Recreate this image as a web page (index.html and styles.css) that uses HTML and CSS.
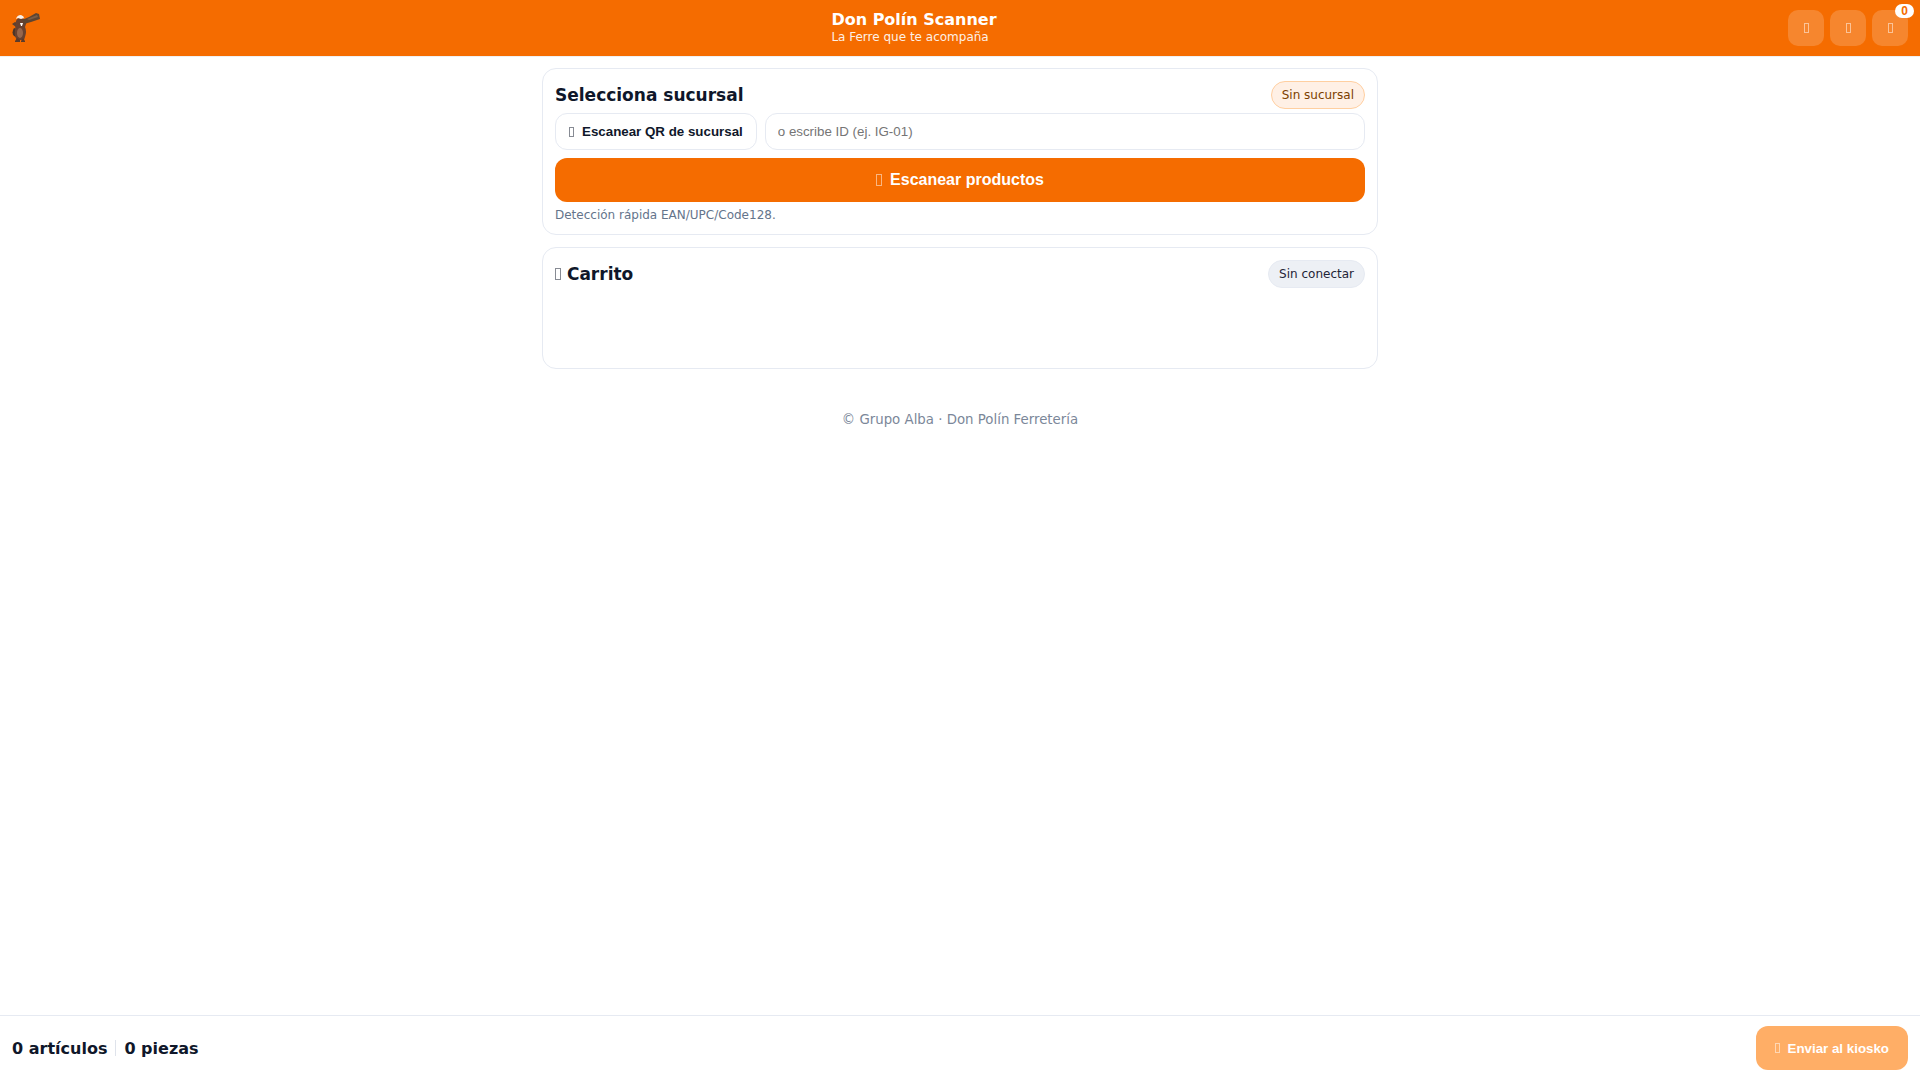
FILE: index.html
```html
<!DOCTYPE html>
<html lang="es">

<head>
    <meta charset="UTF-8">
    <meta name="viewport" content="width=device-width, initial-scale=1.0">
    <title>Don Polín Scanner</title>
    <link rel="stylesheet" href="styles.css">
</head>

<body>
    <header class="topbar">
        <svg class="logo" viewBox="0 0 28 30" role="img" aria-label="Don Polín">
            <path d="M2 15 Q-1 20 2 23 L6 25 L7 17 Z" fill="#493529" />
            <path d="M0 11 L3 9 L7 11 L8 15 L4 14 Z" fill="#5b4030" />
            <path d="M4 8 Q6 4 10 5 L15 8 L13 14 Q15 18 13 24 L12 27 H5 Q2 23 3 17 Z" fill="#68412f" />
            <ellipse cx="8" cy="20" rx="3" ry="5" fill="#96664c" />
            <path d="M10 7 L17 4 L24 0 L27 1 L28 6 L19 9 L12 11 Z" fill="#5d4431" />
            <path d="M15 6 L25 2 L26 4 L17 7 Z" fill="#7a5d46" />
            <path d="M4 6 Q5 2 9 2 Q12 3 12 5 L9 6 L6 5 Z" fill="#f8f0e9" />
            <path d="M8 10 H11 L10 13 H9 Z" fill="#fff" />
            <path d="M3 28 L5 25 L8 27 V29 H3 Z M9 28 L11 25 L13 28 V29 H9 Z" fill="#5a3b2b" />
        </svg>
        <div class="brand">
            <h1 class="brand-title">Don Polín Scanner</h1>
            <div class="brand-sub">La Ferre que te acompaña</div>
        </div>
        <div class="actions">
            <button class="icon-btn" type="button" aria-label="Linterna"><i class="icon"></i></button>
            <button class="icon-btn" type="button" aria-label="Ayuda"><i class="icon"></i></button>
            <button class="icon-btn" type="button" aria-label="Carrito"><i class="icon"></i><span class="count">0</span></button>
        </div>
    </header>

    <main class="container">
        <section class="card">
            <div class="card-head">
                <h2 class="card-title">Selecciona sucursal</h2>
                <span class="pill pill-warn">Sin sucursal</span>
            </div>
            <div class="branch-row">
                <button class="btn btn-outline" type="button"><i class="icon"></i>Escanear QR de sucursal</button>
                <input class="input" type="text" aria-label="ID de sucursal" placeholder="o escribe ID (ej. IG-01)">
            </div>
            <button class="btn btn-primary btn-block" type="button"><i class="icon icon-lg"></i>Escanear productos</button>
            <p class="hint">Detección rápida EAN/UPC/Code128.</p>
        </section>

        <section class="card card-cart">
            <div class="card-head">
                <h2 class="card-title"><i class="icon icon-lg"></i> Carrito</h2>
                <span class="pill">Sin conectar</span>
            </div>
        </section>

        <footer class="footer">© Grupo Alba · Don Polín Ferretería</footer>
    </main>

    <div class="bottombar">
        <div class="totals">
            <span>0 artículos</span>
            <span class="divider"></span>
            <span>0 piezas</span>
        </div>
        <button class="btn btn-primary btn-send" type="button" disabled><i class="icon"></i>Enviar al kiosko</button>
    </div>
</body>

</html>
```

FILE: styles.css
```css
* {
    box-sizing: border-box;
}

body {
    margin: 0;
    min-height: 100vh;
    display: flex;
    flex-direction: column;
    font-family: "DejaVu Sans", sans-serif;
    font-size: 16px;
    color: #0f172a;
    background: #fff;
}

h1,
h2,
p {
    margin: 0;
}

/* Small outlined box used as icon */
.icon {
    display: inline-block;
    width: 5px;
    height: 10px;
    border: 1px solid currentColor;
    opacity: 0.5;
}

.icon-lg {
    width: 6px;
    height: 12px;
}

/* Header */
.topbar {
    display: flex;
    align-items: center;
    justify-content: space-between;
    height: 56px;
    padding: 0 12px;
    color: #fff;
    background: #f56c00;
    box-shadow: 0 1px 0 rgba(0, 0, 0, 0.06);
}

.logo {
    width: 28px;
    height: 30px;
}

.brand-title {
    font-size: 16px;
    line-height: 18px;
}

.brand-sub {
    font-size: 12px;
    line-height: 16px;
    opacity: 0.9;
}

.actions {
    display: flex;
    gap: 6px;
}

.icon-btn {
    position: relative;
    display: flex;
    align-items: center;
    justify-content: center;
    width: 36px;
    height: 36px;
    padding: 0;
    border: 0;
    border-radius: 10px;
    color: #fff;
    background: rgba(255, 255, 255, 0.18);
}

.count {
    position: absolute;
    top: -6px;
    right: -6px;
    padding: 0 6px;
    border-radius: 999px;
    font: bold 12px/14px "Liberation Sans", Arial, sans-serif;
    color: #f56c00;
    background: #fff;
}

/* Content */
.container {
    flex: 1;
    width: 100%;
    max-width: 860px;
    margin: 0 auto;
    padding: 12px;
}

.card {
    margin-bottom: 12px;
    padding: 12px;
    border: 1px solid #e6eaf2;
    border-radius: 14px;
    background: #fff;
}

.card-cart {
    min-height: 122px;
}

.card-head {
    display: flex;
    align-items: center;
    justify-content: space-between;
}

.card-title {
    font-size: 17px;
}

.pill {
    padding: 6px 10px;
    border: 1px solid #e6eaf2;
    border-radius: 999px;
    font-size: 12px;
    line-height: 14px;
    color: #1f2437;
    background: #edf0f5;
}

.pill-warn {
    border-color: #ffcfa0;
    color: #7c3f00;
    background: #fff0e5;
}

.branch-row {
    display: flex;
    gap: 8px;
    margin: 4px 0 8px;
}

.btn {
    display: flex;
    align-items: center;
    justify-content: center;
    gap: 8px;
    border: 0;
    border-radius: 12px;
    font-family: "Liberation Sans", Arial, sans-serif;
    font-weight: bold;
}

.btn-outline {
    padding: 0 13px;
    border: 1px solid #e6eaf2;
    color: #0f172a;
    background: #fff;
}

.input {
    flex: 1;
    min-width: 0;
    height: 37px;
    padding: 0 12px;
    border: 1px solid #e6eaf2;
    border-radius: 12px;
    font-family: "Liberation Sans", Arial, sans-serif;
    background: #fff;
}

.btn-primary {
    height: 44px;
    color: #fff;
    background: #f56c00;
}

.btn-block {
    width: 100%;
    font-size: 16px;
}

.hint {
    margin-top: 6px;
    font-size: 12px;
    line-height: 14px;
    color: #64748b;
}

.footer {
    margin-top: 43px;
    font-size: smaller;
    line-height: 16px;
    text-align: center;
    color: #7b8799;
}

/* Bottom bar */
.bottombar {
    position: sticky;
    bottom: 0;
    display: flex;
    align-items: center;
    justify-content: space-between;
    padding: 10px 12px;
    border-top: 1px solid #e6eaf2;
    background: #fff;
}

.totals {
    display: flex;
    align-items: center;
    gap: 8px;
    font-weight: bold;
}

.divider {
    width: 1px;
    height: 16px;
    background: #dfe3eb;
}

.btn-send {
    padding: 0 19px;
    background: #ffae66;
}
```
